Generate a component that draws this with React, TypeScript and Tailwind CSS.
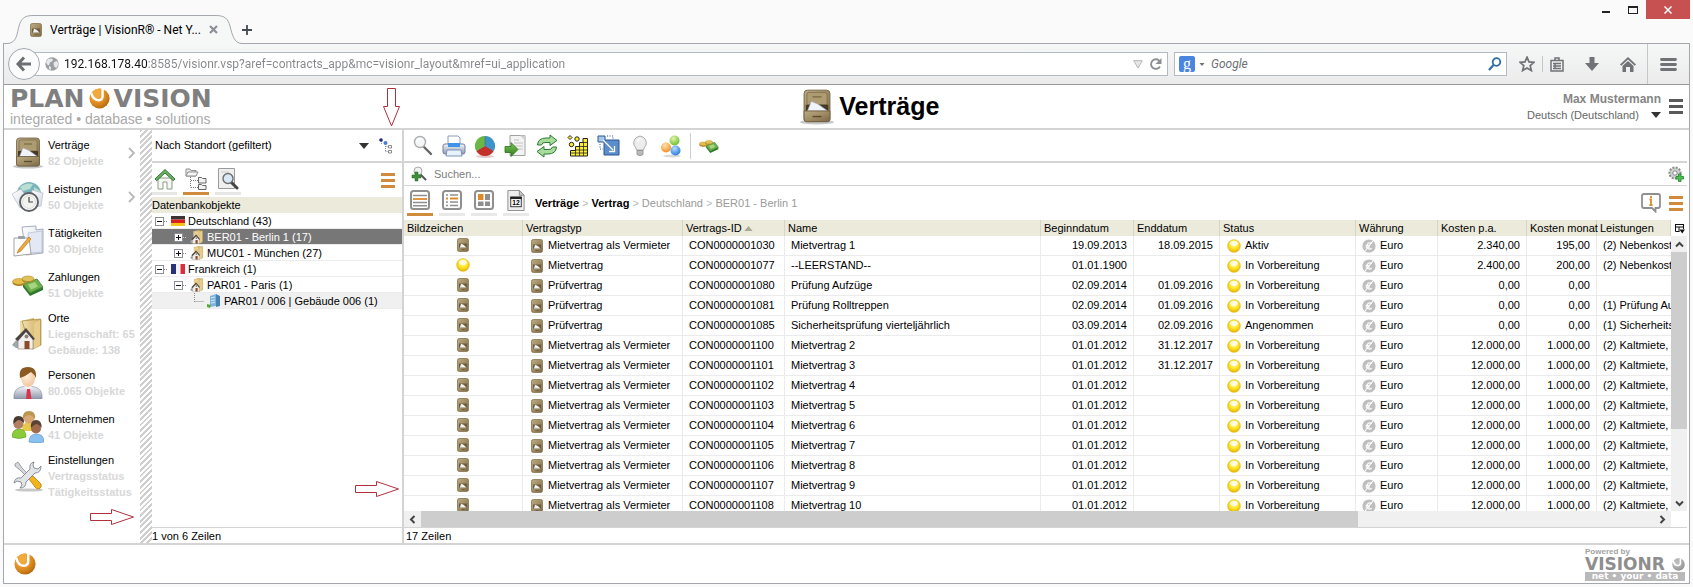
import React from "react";

type IconProps = { className?: string };

/* ---------- drawings ---------- */

function Defs() {
  return (
    <svg width="0" height="0" className="absolute" aria-hidden="true">
      <defs>
        <linearGradient id="tan" x1="0" y1="0" x2="1" y2="1">
          <stop offset="0" stopColor="#bcab82" />
          <stop offset="0.5" stopColor="#a08d65" />
          <stop offset="1" stopColor="#7a6947" />
        </linearGradient>
        <linearGradient id="paper" x1="0" y1="0" x2="1" y2="1">
          <stop offset="0" stopColor="#ffffff" />
          <stop offset="1" stopColor="#d4d8e4" />
        </linearGradient>
        <linearGradient id="folder" x1="0" y1="0" x2="1" y2="0">
          <stop offset="0" stopColor="#f3e2b0" />
          <stop offset="1" stopColor="#cda95a" />
        </linearGradient>
        <linearGradient id="silver" x1="0" y1="0" x2="0" y2="1">
          <stop offset="0" stopColor="#f4f6fa" />
          <stop offset="1" stopColor="#8f98ac" />
        </linearGradient>
        <linearGradient id="leaf" x1="0" y1="0" x2="0" y2="1">
          <stop offset="0" stopColor="#7cc651" />
          <stop offset="1" stopColor="#2f7d1f" />
        </linearGradient>
        <radialGradient id="orangeBall" cx="0.35" cy="0.3" r="0.8">
          <stop offset="0" stopColor="#f7b44a" />
          <stop offset="0.6" stopColor="#dc8a1e" />
          <stop offset="1" stopColor="#a9610c" />
        </radialGradient>
        <radialGradient id="greyBall" cx="0.35" cy="0.3" r="0.8">
          <stop offset="0" stopColor="#d2d2d2" />
          <stop offset="1" stopColor="#8b8b8b" />
        </radialGradient>
        <radialGradient id="yellowBall" cx="0.5" cy="0.35" r="0.65">
          <stop offset="0" stopColor="#fffbd0" />
          <stop offset="0.5" stopColor="#ffe92e" />
          <stop offset="1" stopColor="#e8b400" />
        </radialGradient>
        <radialGradient id="lime" cx="0.4" cy="0.3" r="0.7">
          <stop offset="0" stopColor="#dff5b0" />
          <stop offset="1" stopColor="#72bf2c" />
        </radialGradient>
        <radialGradient id="azure" cx="0.4" cy="0.3" r="0.7">
          <stop offset="0" stopColor="#b5dbff" />
          <stop offset="1" stopColor="#2b7ce0" />
        </radialGradient>
        <radialGradient id="amber" cx="0.4" cy="0.3" r="0.7">
          <stop offset="0" stopColor="#ffe2b0" />
          <stop offset="1" stopColor="#f09226" />
        </radialGradient>
        <radialGradient id="skin" cx="0.4" cy="0.35" r="0.7">
          <stop offset="0" stopColor="#fff1e0" />
          <stop offset="1" stopColor="#f2c499" />
        </radialGradient>
      </defs>
    </svg>
  );
}

const Cabinet = ({ className = "size-8" }: IconProps) => (
  <svg viewBox="0 0 32 32" className={className} aria-hidden="true">
    <ellipse cx="16" cy="29.500" rx="15" ry="2" fill="#000" opacity="0.22" />
    <path d="M4.500 4q0-3 3-3h17q3 0 3 3v23q0 2-2 2h-19q-2 0-2-2z" fill="url(#tan)" stroke="#6f6042" strokeWidth="0.8" />
    <rect x="7" y="3" width="18" height="11" rx="1.500" fill="#ad9b72" stroke="#7a6a48" strokeWidth="0.7" />
    <path d="M12 7h8" stroke="#76663f" strokeWidth="1.100" />
    <path d="M6 14h20v6H6z" fill="#453a25" />
    <path d="M7.500 19.500l3.500-8.500 6 2.500 8.500 6z" fill="#f0f3fa" stroke="#a8afc0" strokeWidth="0.5" />
    <path d="M4.500 19.500h23v7q0 2.500-2.500 2.500H7q-2.500 0-2.500-2.500z" fill="url(#tan)" stroke="#6f6042" strokeWidth="0.8" />
    <path d="M12 24.500h8" stroke="#5a4c2e" strokeWidth="1.300" />
  </svg>
);

const MiniCabinet = () => (
  <svg viewBox="0 0 12 14" className="inline-block h-[14px] w-3 shrink-0" aria-hidden="true">
    <rect x="0.5" y="0.5" width="11" height="13" rx="1.800" fill="url(#tan)" stroke="#85754f" strokeWidth="0.8" />
    <path d="M2 5.500h8v4H2z" fill="#6b5c3e" />
    <path d="M3 9.500l1-3.700 2.500 1 3 2.700z" fill="#f2f2f2" />
    <path d="M4.500 11.500h3" stroke="#6b5a38" strokeWidth="0.8" />
  </svg>
);

const YellowDot = () => (
  <svg viewBox="0 0 14 14" className="inline-block size-[14px] shrink-0" aria-hidden="true">
    <circle cx="7" cy="7" r="6.300" fill="url(#yellowBall)" stroke="#e0b820" strokeWidth="0.7" />
    <ellipse cx="7" cy="4.300" rx="3.800" ry="2.600" fill="#fff" opacity="0.75" />
  </svg>
);

const Coin = () => (
  <svg viewBox="0 0 14 14" className="inline-block size-[14px] shrink-0" aria-hidden="true">
    <circle cx="7" cy="7" r="6.600" fill="#bebebe" />
    <path d="M9.800 4.600Q8 3.300 6.300 4.200 4.800 5.200 4.900 7.500q.3 2 2 2.500 1.500.2 2.800-.8" stroke="#fff" strokeWidth="1.200" fill="none" />
    <path d="M3.500 6.400h4.500M3.500 8.200h4.500" stroke="#fff" strokeWidth="0.900" />
    <path d="M3 12L11 2" stroke="#fff" strokeWidth="1.100" />
  </svg>
);

const Services = () => (
  <svg viewBox="0 0 32 32" className="size-8" aria-hidden="true">
    <circle cx="17" cy="13" r="12" fill="#7ab4bc" />
    <path d="M8 6q6-5 13-3l-3 5-7 2zM22 6l6 4 0 6-6-2z" fill="#b9dfd2" />
    <path d="M0 13l9-5 8 12-9 7z" fill="url(#paper)" stroke="#b6bac4" strokeWidth="0.7" />
    <path d="M20 9l11 3-2 13-9 1z" fill="url(#paper)" stroke="#b6bac4" strokeWidth="0.7" />
    <circle cx="17" cy="21" r="9" fill="#fff" stroke="#5e6166" strokeWidth="2" />
    <circle cx="17" cy="21" r="6.500" fill="#f2f2ee" stroke="#cfcfcf" strokeWidth="0.8" />
    <path d="M17 16v5h4" stroke="#444" strokeWidth="1.200" fill="none" />
  </svg>
);

const Tasks = () => (
  <svg viewBox="0 0 32 32" className="size-8" aria-hidden="true">
    <path d="M10 2l14-1 0 4 7-1v24l-17 2z" fill="url(#paper)" stroke="#9da3b8" strokeWidth="0.9" />
    <path d="M16 8l14-2v21l-12 1z" fill="#e4e8f4" stroke="#b4bace" strokeWidth="0.7" />
    <path d="M2 13h15l2 16-17 2z" fill="#fff" stroke="#9a9a9a" strokeWidth="0.9" />
    <path d="M5 28l2-4L17 12l2 2L9 26z" fill="#f0a93c" stroke="#b8741a" strokeWidth="0.7" />
    <rect x="6" y="11" width="7" height="3" rx="1" fill="#9aa0aa" />
  </svg>
);

const Money = ({ className = "size-8" }: IconProps) => (
  <svg viewBox="0 0 32 32" className={className} aria-hidden="true">
    <path d="M11 15l14-5 6 8-13 6z" fill="#6bb04c" stroke="#2f7023" strokeWidth="0.7" />
    <path d="M11 15l7 9v3l-7-9zM18 24l13-6v3l-13 6z" fill="#2f7a2a" />
    <path d="M16 15.500l7-2.500 3 4.500-7 3z" fill="#a7d57f" />
    <ellipse cx="7" cy="14" rx="6.500" ry="3" fill="#a87a1c" />
    <ellipse cx="7" cy="12.500" rx="6.500" ry="3" fill="#e6bc4c" stroke="#b58a24" strokeWidth="0.6" />
    <ellipse cx="16" cy="11" rx="6" ry="2.800" fill="#9c8a2a" />
    <ellipse cx="16" cy="9.800" rx="6" ry="2.800" fill="#dfc15a" stroke="#a88a2a" strokeWidth="0.6" />
  </svg>
);

const Place = ({ className = "size-8" }: IconProps) => (
  <svg viewBox="0 0 32 32" className={className} aria-hidden="true">
    <path d="M8 3l14-3v28l-14 3z" fill="url(#folder)" />
    <path d="M10 3l18-2q1 0 1 1v25l-8 4-2-1z" fill="url(#folder)" stroke="#a88742" strokeWidth="0.7" />
    <path d="M22 5l6-3v25l-6 4z" fill="#e6cd8c" />
    <path d="M0 27l6-7 2 10H4z" fill="#9fa8a8" />
    <path d="M6 20l8-8 7 8v11H6z" fill="#f2f0ee" stroke="#857b72" strokeWidth="0.6" />
    <path d="M3 21l11-11 9 11-2 1-7-8-8 9z" fill="#4c443e" />
    <rect x="12.500" y="23" width="5" height="8" fill="#8a4b2a" />
    <circle cx="14.500" cy="18.500" r="2" fill="#8d8078" />
  </svg>
);

const Person = () => (
  <svg viewBox="0 0 32 32" className="size-8" aria-hidden="true">
    <path d="M2 32q-1-10 7-12l7-1 7 1q8 2 7 12z" fill="url(#silver)" stroke="#80889e" strokeWidth="0.6" />
    <path d="M12 19l4 5 4-5v-3h-8z" fill="#f4f4fa" />
    <path d="M15 22h3l1.500 10h-5.500z" fill="#d8344c" />
    <ellipse cx="16" cy="11" rx="7" ry="9" fill="url(#skin)" />
    <path d="M8 11q-2-11 8-11 9 0 8 11-2-4-5-6-5 4-11 6z" fill="#8a5a22" />
  </svg>
);

const People = () => (
  <svg viewBox="0 0 32 32" className="size-8" aria-hidden="true">
    <path d="M10 20q0-9 7-9t7 9z" fill="#e8c84a" />
    <circle cx="17" cy="7" r="5.500" fill="#d9a873" />
    <path d="M11 8q-1-8 6-8t6 8q-3-4-6-4t-6 4z" fill="#b99750" />
    <path d="M0 26q0-8 7-8t7 8q-7 3-14 0z" fill="#8ccc3c" stroke="#5c9a1e" strokeWidth="0.6" />
    <circle cx="6.500" cy="13" r="5" fill="#b08060" />
    <path d="M1.500 13q-1-8 5-8t5.500 7q-3-3-5-3t-5.500 4z" fill="#4a3a34" />
    <path d="M17 31q0-8 7.500-8t7.500 8q-8 2-15 0z" fill="#8cc0f0" stroke="#5a90c8" strokeWidth="0.6" />
    <circle cx="24" cy="17.500" r="5" fill="#a06a4c" />
    <path d="M19 17q-1-8 5-8t5.500 8q-3-4-5-4t-5.500 4z" fill="#5a4236" />
  </svg>
);

const Tools = () => (
  <svg viewBox="0 0 32 32" className="size-8" aria-hidden="true">
    <ellipse cx="17" cy="30" rx="14" ry="1.600" fill="#000" opacity="0.22" />
    <path d="M3 4l3-2 4 6 9 9-2 2-9-9-5-4z" fill="#d4d8dc" stroke="#858b92" strokeWidth="0.8" />
    <path d="M17 16l4 0 8 8q1 4-2 5-3 0-4-2l-6-8z" fill="#f2b41e" stroke="#b87c10" strokeWidth="0.8" />
    <path
      d="M22 2q-5 1-4 7L9 18q-6-1-7 5l3-2 4 1 1 3-2 3q6 0 6-6l9-9q6 0 6-7l-3 3-4-1-1-3z"
      fill="#e2e5e8"
      stroke="#7d848c"
      strokeWidth="0.9"
    />
  </svg>
);

const Ball = ({ className, grey }: IconProps & { grey?: boolean }) => (
  <svg viewBox="0 0 24 24" className={className} aria-hidden="true">
    <circle cx="12" cy="12" r="11.500" fill={grey ? "url(#greyBall)" : "url(#orangeBall)"} />
    <path d="M2.500 5.500q2 8.500 8.500 8.500 4.500-.5 4.500-5V1" fill="none" stroke="#fff" strokeWidth="2.800" />
    <path d="M5 4q1 6 5.500 6.500 2.500-.5 2.500-3V.600q-5-.4-8 3.400z" fill={grey ? "#b9b9b9" : "#f3aa3c"} />
  </svg>
);

const Bars = ({ className }: IconProps) => (
  <svg viewBox="0 0 14 15" className={className} fill="currentColor" aria-hidden="true">
    <path d="M0 0h14v3H0zM0 6h14v3H0zM0 12h14v3H0z" />
  </svg>
);

const Caret = ({ className }: IconProps) => (
  <svg viewBox="0 0 10 6" className={className} fill="currentColor" aria-hidden="true">
    <path d="M0 0h10L5 6z" />
  </svg>
);

const RedArrow = ({ className, down }: IconProps & { down?: boolean }) => (
  <svg viewBox={down ? "0 0 17 39" : "0 0 44 16"} className={className} fill="#fff" stroke="#b0303c" aria-hidden="true">
    {down ? (
      <path d="M4.500.5h8v18h4L8.500 38 .5 18.500h4z" />
    ) : (
      <path d="M.5 4.500h21v-4L43.500 8l-22 7.500v-4H.5z" />
    )}
  </svg>
);

const svg24 = "size-6";

const toolbarIcons: { label: string; node: React.ReactNode }[] = [
  {
    label: "Suchen",
    node: (
      <svg viewBox="0 0 24 24" className={svg24}>
        <path d="M13 13l7 7" stroke="#666" strokeWidth="2.400" strokeLinecap="round" />
        <circle cx="9" cy="8" r="5.500" fill="#f4f6f8" stroke="#adadad" strokeWidth="1.400" />
        <path d="M6 8q0-3.500 4-3.500" stroke="#fff" strokeWidth="1.500" fill="none" />
      </svg>
    ),
  },
  {
    label: "Drucken",
    node: (
      <svg viewBox="0 0 24 24" className={svg24}>
        <path d="M6 2h10l2 2v8H6z" fill="#fff" stroke="#8c9cb4" />
        <path d="M3 10h18q2 0 2 2v6q0 2-2 2H3q-2 0-2-2v-6q0-2 2-2z" fill="url(#silver)" stroke="#7080a0" />
        <path d="M6 9h12v4H6z" fill="#3f94e8" />
        <path d="M5 16h14l1 6H4z" fill="#e8f2fc" stroke="#7e93b8" />
      </svg>
    ),
  },
  {
    label: "Diagramm",
    node: (
      <svg viewBox="0 0 24 24" className={svg24}>
        <ellipse cx="12" cy="22.500" rx="9" ry="1.500" fill="#d6b0b0" opacity="0.7" />
        <path d="M12 12V2a10 10 0 0 1 8.700 15z" fill="#3f93c8" />
        <path d="M12 12L20.700 17A10 10 0 0 1 3.300 17z" fill="#c4302a" />
        <path d="M12 12L3.300 17A10 10 0 0 1 12 2z" fill="#69b844" />
        <path d="M12 12V2.500M12 12l8 5M12 12l-8 5" stroke="#224455" strokeWidth="0.6" opacity="0.5" />
      </svg>
    ),
  },
  {
    label: "Exportieren",
    node: (
      <svg viewBox="0 0 24 24" className={svg24}>
        <path d="M6 1.500h15v20H6z" fill="#f3f3f3" stroke="#a0a0a0" />
        <path d="M16 1.500h5v5z" fill="#cfcfcf" />
        <path d="M10 6h5M10 9h9M10 12h9M14 15h5" stroke="#c2c2c2" />
        <path d="M1 12.500h6v-4l7 7-7 7v-4H1z" fill="url(#leaf)" stroke="#2a6e1c" strokeWidth="0.8" />
      </svg>
    ),
  },
  {
    label: "Aktualisieren",
    node: (
      <svg viewBox="0 0 24 24" className={svg24}>
        <path d="M2.500 11Q3 4 11 4h4V1l7 5.500-7 5V8.500h-4Q7 8 6.500 11z" fill="#a8dc9c" stroke="#2d7a34" />
        <path d="M21.500 13Q21 20 13 20H9v3l-7-5.500 7-5V15.500h4q4 .5 4.500-2.500z" fill="#a8dc9c" stroke="#2d7a34" />
      </svg>
    ),
  },
  {
    label: "Berechnen",
    node: (
      <svg viewBox="0 0 24 24" className={svg24}>
        <path d="M17 4.500h4.500v17.500H4.500v-5.500h5v-4h4V8.500H17z" fill="#ffee2a" stroke="#222" />
        <path d="M4.500 19h17M9.500 16h12M13.500 12.500h8M17 8.500h4.500M9.500 16v6M13.500 12v10M17.500 8v14" stroke="#222" strokeWidth="0.8" />
        <circle cx="5.500" cy="10.500" r="2.200" fill="#ffee2a" stroke="#222" />
        <circle cx="11" cy="5" r="2.200" fill="#ffee2a" stroke="#222" />
        <path d="M4 1.500l2 2-2 2-2-2z" fill="#ffee2a" stroke="#222" />
      </svg>
    ),
  },
  {
    label: "Skalieren",
    node: (
      <svg viewBox="0 0 24 24" className={svg24}>
        <path d="M7 6h15v15H7z" fill="#5b8ccc" stroke="#2c5690" />
        <path d="M1 2h7v6H1z" fill="#a9c6ec" stroke="#2c5690" />
        <path d="M10 2h6v4M3 10v5h3" fill="none" stroke="#2c5690" strokeDasharray="1 1.500" />
        <path d="M6 6l10 10M17.500 12v5.500H12" stroke="#fff" strokeWidth="1.300" fill="none" />
      </svg>
    ),
  },
  {
    label: "Hinweis",
    node: (
      <svg viewBox="0 0 24 24" className={svg24}>
        <path d="M8.500 16q-.5-3-2.500-5-1.500-7 6-9 7.500 2 6 9-2 2-2.500 5z" fill="#ededed" stroke="#ababab" />
        <path d="M9 16.500h6v4q-3 2.500-6 0z" fill="#b9b9b9" stroke="#8c8c8c" strokeWidth="0.8" />
        <path d="M9.500 8q.500-3 3-3.500" stroke="#fff" strokeWidth="1.600" fill="none" />
      </svg>
    ),
  },
  {
    label: "Verknüpfungen",
    node: (
      <svg viewBox="0 0 24 24" className={svg24}>
        <ellipse cx="13" cy="22" rx="9" ry="1.500" fill="#000" opacity="0.15" />
        <circle cx="15.500" cy="6.500" r="5" fill="url(#lime)" />
        <circle cx="7" cy="13.500" r="5" fill="url(#amber)" />
        <circle cx="16.500" cy="16.500" r="5" fill="url(#azure)" />
      </svg>
    ),
  },
];

/* ---------- data ---------- */

const navItems = [
  { title: "Verträge", lines: ["82 Objekte"], icon: <Cabinet />, more: true },
  { title: "Leistungen", lines: ["50 Objekte"], icon: <Services />, more: true },
  { title: "Tätigkeiten", lines: ["30 Objekte"], icon: <Tasks /> },
  { title: "Zahlungen", lines: ["51 Objekte"], icon: <Money /> },
  { title: "Orte", lines: ["Liegenschaft: 65", "Gebäude: 138"], icon: <Place /> },
  { title: "Personen", lines: ["80.065 Objekte"], icon: <Person /> },
  { title: "Unternehmen", lines: ["41 Objekte"], icon: <People /> },
  { title: "Einstellungen", lines: ["Vertragsstatus", "Tätigkeitsstatus"], icon: <Tools /> },
];

const columns = [
  { label: "Bildzeichen", width: "w-[119px]" },
  { label: "Vertragstyp", width: "w-[160px]" },
  { label: "Vertrags-ID", width: "w-[102px]", sorted: true },
  { label: "Name", width: "w-auto" },
  { label: "Beginndatum", width: "w-[93px]" },
  { label: "Enddatum", width: "w-[86px]" },
  { label: "Status", width: "w-[136px]" },
  { label: "Währung", width: "w-[82px]" },
  { label: "Kosten p.a.", width: "w-[89px]" },
  { label: "Kosten monat", width: "w-[70px]" },
  { label: "Leistungen", width: "w-[74px]" },
];

type Row = [string, string, string, string, string, string, string, string, string];

const ALS = "Mietvertrag als Vermieter";
const VORB = "In Vorbereitung";
const later = (n: number): Row => [
  ALS,
  `CON000000${1098 + n}`,
  `Mietvertrag ${n}`,
  "01.01.2012",
  n < 4 ? "31.12.2017" : "",
  VORB,
  "12.000,00",
  "1.000,00",
  "(2) Kaltmiete,",
];

const rows: Row[] = [
  [ALS, "CON0000001030", "Mietvertrag 1", "19.09.2013", "18.09.2015", "Aktiv", "2.340,00", "195,00", "(2) Nebenkost"],
  ["Mietvertrag", "CON0000001077", "--LEERSTAND--", "01.01.1900", "", VORB, "2.400,00", "200,00", "(2) Nebenkost"],
  ["Prüfvertrag", "CON0000001080", "Prüfung Aufzüge", "02.09.2014", "01.09.2016", VORB, "0,00", "0,00", ""],
  ["Prüfvertrag", "CON0000001081", "Prüfung Rolltreppen", "02.09.2014", "01.09.2016", VORB, "0,00", "0,00", "(1) Prüfung Au"],
  ["Prüfvertrag", "CON0000001085", "Sicherheitsprüfung vierteljährlich", "03.09.2014", "02.09.2016", "Angenommen", "0,00", "0,00", "(1) Sicherheits"],
  ...[2, 3, 4, 5, 6, 7, 8, 9, 10].map(later),
];

/* ---------- browser chrome ---------- */

function TitleStrip() {
  return (
    <div className="flex h-[43px] items-end justify-between">
      <div className="flex items-end">
        <div className="relative z-10 -mb-px ml-[3px] flex h-[29px] w-[243px] items-center pr-[25px] pl-[27px]">
          <svg viewBox="0 0 243 29" className="absolute inset-0 h-[29px] w-[243px]" aria-hidden="true">
            <path
              d="M0 29v-.5h4C14 28.500 14 18 16 11 18 4 21 .5 30 .5H213C222 .5 225 4 227 11c2 8 4 17.500 12 17.500h4V29z"
              fill="#f6f7f7"
            />
            <path
              d="M0 28.500h4C14 28.500 14 18 16 11 18 4 21 .5 30 .5H213C222 .5 225 4 227 11c2 8 4 17.500 12 17.500h4"
              fill="none"
              stroke="#a4a8ac"
            />
          </svg>
          <span className="relative flex min-w-0 flex-1 items-center gap-2 text-[12px] whitespace-nowrap">
            <MiniCabinet />
            Verträge | VisionR® - Net Y...
          </span>
          <button aria-label="Tab schließen" className="relative mr-[3px]">
            <svg viewBox="0 0 9 9" className="size-[9px]">
              <path d="M1 1l7 7M8 1L1 8" stroke="#8a9096" strokeWidth="2.200" />
            </svg>
          </button>
        </div>
        <button aria-label="Neuer Tab" className="-ml-1 pb-2">
          <svg viewBox="0 0 10 10" className="size-[10px]">
            <path d="M5 0v10M0 5h10" stroke="#444b52" strokeWidth="1.800" />
          </svg>
        </button>
      </div>
      <div className="mr-[3px] flex self-start">
        <button aria-label="Minimieren" className="flex h-[19px] w-[27px] items-center justify-center pt-1">
          <span className="h-0.5 w-2 bg-[#222]" />
        </button>
        <button aria-label="Maximieren" className="flex h-[19px] w-[27px] items-center justify-center">
          <span className="h-2 w-[10px] border border-t-2 border-[#222]" />
        </button>
        <button aria-label="Schließen" className="flex h-[19px] w-11 items-center justify-center bg-[#c75050]">
          <svg viewBox="0 0 8 8" className="size-2">
            <path d="M.5.5l7 7M7.500.5l-7 7" stroke="#fff" strokeWidth="1.500" />
          </svg>
        </button>
      </div>
    </div>
  );
}

function NavToolbar() {
  return (
    <div className="flex h-[41px] items-center border-b border-[#97999b] bg-linear-to-b from-[#f6f7f7] to-[#ebebec] pl-1 text-[#707276]">
      <button
        aria-label="Zurück"
        className="z-10 -mr-3 flex size-8 shrink-0 items-center justify-center rounded-full border border-[#a4a8ac] bg-[#fbfbfb]"
      >
        <svg viewBox="0 0 16 16" className="size-4">
          <path d="M8 1.500L2 8l6 6.500M2.500 8H15" stroke="#6c6e72" strokeWidth="3" fill="none" />
        </svg>
      </button>
      <div className="flex h-6 min-w-0 flex-1 items-center border border-[#b4bac2] bg-white pr-1 pl-4">
        <svg viewBox="0 0 14 14" className="size-[14px] shrink-0" aria-hidden="true">
          <circle cx="7" cy="7" r="6.700" fill="#9c9fa2" />
          <path d="M3 2l4-.500 1 2-3 2-1 3-2-1L1 5zM9 5l3-1 1.500 3-2 4-2-1-1-3zM4 9l2 1v3l-2-1z" fill="#e6e8ea" />
        </svg>
        <input
          aria-label="Adresse"
          defaultValue="192.168.178.40:8585/visionr.vsp?aref=contracts_app&mc=visionr_layout&mref=ui_application"
          className="ml-[5px] min-w-0 flex-1 bg-[linear-gradient(to_right,#111_84px,#85878a_84px)] bg-clip-text text-[12px] text-transparent outline-none"
        />
        <button aria-label="Verlauf" className="mr-[6px]">
          <svg viewBox="0 0 10 9" className="h-[9px] w-[10px]">
            <path d="M.7.7h8.600L5 8z" fill="#e8e8e8" stroke="#b4b6b8" />
          </svg>
        </button>
        <button aria-label="Neu laden">
          <svg viewBox="0 0 14 14" className="size-[14px]">
            <path d="M11 9.500A4.800 4.800 0 1 1 10.500 4" stroke="#8b8f94" strokeWidth="1.900" fill="none" />
            <path d="M12.500 1v6h-6z" fill="#8b8f94" />
          </svg>
        </button>
      </div>
      <div className="ml-[6px] flex h-6 w-[333px] items-center border border-[#b4bac2] bg-white px-1">
        <span className="flex size-4 items-center justify-center rounded-xs bg-[#4a86e0] font-['Liberation_Serif',serif] text-[16px] leading-3 text-white">
          g
        </span>
        <Caret className="ml-1 h-[3px] w-[6px]" />
        <input
          aria-label="Google"
          placeholder="Google"
          className="ml-[6px] min-w-0 flex-1 text-[12px] italic outline-none placeholder:text-[#6d6f72]"
        />
        <button aria-label="Suche starten">
          <svg viewBox="0 0 14 14" className="size-[14px]">
            <circle cx="8.500" cy="5" r="3.800" fill="none" stroke="#2f6ea8" strokeWidth="1.800" />
            <path d="M5.500 8L1 13" stroke="#2f6ea8" strokeWidth="2.200" />
          </svg>
        </button>
      </div>
      <button aria-label="Lesezeichen" className="ml-3">
        <svg viewBox="0 0 16 16" className="size-4">
          <path
            d="M8 1.200l2 4.700 5 .4-3.800 3.300 1.200 5L8 12l-4.400 2.600 1.200-5L1 6.300l5-.4z"
            fill="none"
            stroke="currentColor"
            strokeWidth="1.700"
          />
        </svg>
      </button>
      <span className="ml-[7px] h-4 w-px bg-[#c4c6c8]" />
      <button aria-label="Lesezeichenliste" className="ml-[7px]">
        <svg viewBox="0 0 14 15" className="h-[15px] w-[14px]">
          <path
            d="M1 3.500h12v10.500H1zM5 3V1h4v2M3 6.500h8M3 9h8M3 11.500h8M5 6v6"
            fill="none"
            stroke="currentColor"
            strokeWidth="1.500"
          />
        </svg>
      </button>
      <button aria-label="Downloads" className="ml-[21px]">
        <svg viewBox="0 0 14 14" className="size-[14px]">
          <path d="M4.500 0h5v6H14l-7 8-7-8h4.500z" fill="currentColor" />
        </svg>
      </button>
      <button aria-label="Startseite" className="ml-[21px]">
        <svg viewBox="0 0 16 15" className="h-[15px] w-4">
          <path d="M8 0l8 7.500-1.300 1.200L8 2.500 1.300 8.700 0 7.500z" fill="currentColor" />
          <path d="M8 4l5.500 5v6H10v-5H6v5H2.500V9z" fill="currentColor" />
        </svg>
      </button>
      <span className="ml-[11px] h-full w-px bg-[#c4c6c8]" />
      <button aria-label="Menü" className="mx-3">
        <svg viewBox="0 0 17 13" className="h-[13px] w-[17px]">
          <path
            d="M1.500 1.500h14M1.500 6.500h14M1.500 11.500h14"
            stroke="currentColor"
            strokeWidth="2.800"
            strokeLinecap="round"
          />
        </svg>
      </button>
    </div>
  );
}

/* ---------- application ---------- */

function AppHeader() {
  return (
    <header className="flex h-[45px] shrink-0 items-center justify-between border-b-2 border-[#d4d4d4]">
      <div className="pl-[6px]">
        <div className="flex items-center font-['DejaVu_Sans',sans-serif] text-[25px] leading-6 font-bold text-[#7f7f7f]">
          PLAN
          <Ball className="mx-1 size-[21px]" />
          VISION
        </div>
        <div className="text-[14px] leading-4 text-[#a9a9a9]">integrated • database • solutions</div>
      </div>
      <h1 className="flex items-center gap-1 text-[25px] font-bold text-black">
        <Cabinet className="size-9" />
        Verträge
      </h1>
      <div className="flex items-center justify-end gap-2 pr-[6px]">
        <div className="text-right">
          <div className="text-[12px] leading-4 font-bold text-[#858585]">Max Mustermann</div>
          <label className="flex items-center justify-end gap-3">
            <select aria-label="Sprache" className="appearance-none text-[11px] leading-4 text-[#666] outline-none">
              <option>Deutsch (Deutschland)</option>
            </select>
            <Caret className="h-[6px] w-[10px] text-[#333]" />
          </label>
        </div>
        <button aria-label="Benutzermenü" className="text-[#5a5a5a]">
          <Bars className="h-[15px] w-[14px]" />
        </button>
      </div>
    </header>
  );
}

function SideNav() {
  return (
    <nav className="w-[136px] shrink-0 overflow-hidden pt-px">
      {navItems.map((item) => (
        <a
          key={item.title}
          href={`#${item.title}`}
          className={`flex items-center gap-1 pl-2 ${item.lines.length > 1 ? "py-[3px]" : "py-[6px]"}`}
        >
          <span className="shrink-0">{item.icon}</span>
          <span className="min-w-0 flex-1 leading-4 whitespace-nowrap">
            <span className="block text-black">{item.title}</span>
            {item.lines.map((line) => (
              <span key={line} className="block font-bold text-[#d8d8d8]">
                {line}
              </span>
            ))}
          </span>
          {item.more && (
            <svg viewBox="0 0 8 12" className="mr-1 h-3 w-2 shrink-0" aria-hidden="true">
              <path d="M1 1l5 5-5 5" stroke="#b8b8b8" strokeWidth="1.800" fill="none" />
            </svg>
          )}
        </a>
      ))}
    </nav>
  );
}

const Expander = ({ open, light }: { open: boolean; light?: boolean }) => (
  <svg viewBox="0 0 13 16" className="h-4 w-[13px] shrink-0" aria-hidden="true">
    <path d="M9 8.500h4" stroke={light ? "#ccc" : "#888"} strokeDasharray="1 1" />
    <rect x="0.500" y="4.500" width="8" height="8" fill="#fff" stroke="#8a8f98" />
    <path d={open ? "M2 8.500h5" : "M2 8.500h5M4.500 6v5"} stroke="#111" />
  </svg>
);

const FlagDe = () => (
  <svg viewBox="0 0 14 10" className="h-[10px] w-[14px] shrink-0" aria-hidden="true">
    <path d="M0 0h14v3.500H0z" fill="#3c3434" />
    <path d="M0 3.500h14V7H0z" fill="#d8201c" />
    <path d="M0 7h14v3H0z" fill="#f5c220" />
  </svg>
);

const FlagFr = () => (
  <svg viewBox="0 0 14 10" className="h-[10px] w-[14px] shrink-0" aria-hidden="true">
    <path d="M0 0h5v10H0z" fill="#28327c" />
    <path d="M5 0h4.500v10H5z" fill="#f4f4f8" />
    <path d="M9.500 0H14v10H9.500z" fill="#dc2c3c" />
  </svg>
);

const Building = () => (
  <svg viewBox="0 0 14 14" className="size-[14px] shrink-0" aria-hidden="true">
    <path d="M3 2l6-2v12l-6 1z" fill="#7db4dc" />
    <path d="M9 0l4 2v10l-4 1z" fill="#4a82b4" />
    <path d="M4 4l4-1M4 6.500l4-.500M4 9l4-.500" stroke="#d6ecfa" />
    <path d="M0 10l4 1-1 3-3-1z" fill="#59a83c" />
  </svg>
);

const treeRow = "flex h-4 items-center gap-[3px] border-b border-[#ececec] pt-px whitespace-nowrap";

function TreePanel() {
  return (
    <section className="flex w-[250px] shrink-0 flex-col">
      <div className="flex h-[33px] shrink-0 items-center border-b-2 border-[#d4d4d4] pr-[9px] pl-[3px]">
        <label className="flex flex-1 items-center">
          <select aria-label="Gruppierung" className="flex-1 appearance-none text-[11px] outline-none">
            <option>Nach Standort (gefiltert)</option>
          </select>
          <Caret className="h-[6px] w-[10px] text-[#333]" />
        </label>
        <button aria-label="Baumansicht" className="ml-[10px]">
          <svg viewBox="0 0 14 16" className="h-4 w-[14px]">
            <path
              d="M2.500 3v3M6.500 6v8M6.500 8.500h3M6.500 13.500h3"
              stroke="#8a94a8"
              strokeDasharray="1 1"
              fill="none"
            />
            <circle cx="2" cy="2" r="1.800" fill="#1c2c78" />
            <circle cx="6.500" cy="5" r="2" fill="#4c7cd8" />
            <path d="M9.500 7.500h3v2.500h-3zM9.500 12.500h3V15h-3z" fill="#fff" stroke="#8a8a8a" />
          </svg>
        </button>
      </div>
      <div className="flex h-[34px] shrink-0 items-center justify-between pr-[7px]">
        <div className="flex gap-[6px] self-end pb-0.5">
          <button aria-label="Start" className="flex h-[27px] w-[25px] items-start justify-center border-b-3 border-[#e6e6e6]">
            <svg viewBox="0 0 22 22" className="size-[22px]">
              <path d="M4 10h14v11h-5v-7H9v7H4z" fill="#f6f6f2" stroke="#8c9a86" />
              <path d="M11 1.500L1 11l1.700 1.700L11 5l8.300 7.700L21 11z" fill="#6eb45e" stroke="#2f7436" />
            </svg>
          </button>
          <button aria-label="Hierarchie" className="flex h-[27px] w-[26px] items-start justify-center border-b-3 border-[#d08c3c]">
            <svg viewBox="0 0 22 22" className="size-[22px]">
              <path d="M1 1h4l1 1.500h5V8H1z" fill="#e8e8e8" stroke="#8f8f8f" />
              <path d="M3 4h10l-2 4H1z" fill="#f6f6f6" stroke="#8f8f8f" />
              <path d="M5.500 9v10.500M6 12.500h7M6 19.500h7" stroke="#777" strokeDasharray="1 1" />
              <path d="M13.500 9.500h3l1 1h3.500V15h-7.500zM13.500 16.500h3l1 1h3.500V21.500h-7.500z" fill="#f2f2f2" stroke="#666" />
            </svg>
          </button>
          <button aria-label="Vorschau" className="flex h-[27px] w-[26px] items-start justify-center border-b-3 border-[#e6e6e6]">
            <svg viewBox="0 0 22 22" className="size-[22px]">
              <path d="M1.500.5h16v20h-16z" fill="#efefef" stroke="#9a9a9a" />
              <path d="M4 4h8" stroke="#ccc" />
              <path d="M14 14l6 6" stroke="#444" strokeWidth="3" strokeLinecap="round" />
              <circle cx="11" cy="10.500" r="5" fill="#d8e8f6" stroke="#6d6d6d" strokeWidth="1.400" />
            </svg>
          </button>
        </div>
        <button aria-label="Menü der Struktur" className="text-[#d08c3c]">
          <Bars className="h-[15px] w-[14px]" />
        </button>
      </div>
      <div className="h-4 shrink-0 bg-[#ebeadb] leading-4">Datenbankobjekte</div>
      <ul className="min-h-0 flex-1">
        <li className={`${treeRow} pl-[3px]`}>
          <Expander open />
          <FlagDe />
          Deutschland (43)
        </li>
        <li className={`${treeRow} bg-[#777] pl-[22px] text-white`}>
          <Expander open={false} light />
          <Place className="size-[14px] shrink-0" />
          BER01 - Berlin 1 (17)
        </li>
        <li className={`${treeRow} pl-[22px]`}>
          <Expander open={false} />
          <Place className="size-[14px] shrink-0" />
          MUC01 - München (27)
        </li>
        <li className={`${treeRow} pl-[3px]`}>
          <Expander open />
          <FlagFr />
          Frankreich (1)
        </li>
        <li className={`${treeRow} pl-[22px]`}>
          <Expander open />
          <Place className="size-[14px] shrink-0" />
          PAR01 - Paris (1)
        </li>
        <li className={`${treeRow} bg-[#f0f0f0] pl-[42px]`}>
          <svg viewBox="0 0 10 16" className="h-4 w-[10px] shrink-0" aria-hidden="true">
            <path d="M.5 0v9M.5 8.500H10" stroke="#888" strokeDasharray="1 1" fill="none" />
          </svg>
          <Building />
          PAR01 / 006 | Gebäude 006 (1)
        </li>
      </ul>
      <div className="h-4 shrink-0 border-t border-[#d4d4d4] leading-4">1 von 6 Zeilen</div>
    </section>
  );
}

const viewButton = "flex h-[26px] w-[26px] items-start justify-center border-b-3";

function ViewRow() {
  return (
    <div className="flex h-[34px] shrink-0 items-center pr-1 pl-[3px]">
      <div className="flex gap-[6px]">
        <button aria-label="Liste" className={`${viewButton} border-[#d08c3c]`}>
          <svg viewBox="0 0 20 20" className="size-5">
            <rect x="1" y="1" width="18" height="18" rx="2.500" fill="#fff" stroke="#8f8f8f" strokeWidth="2" />
            <path d="M3 5.500h14M3 12.500h14M3 15.800h14" stroke="#8f8f8f" strokeWidth="1.600" />
            <path d="M3 9h14" stroke="#dd8a2c" strokeWidth="1.800" />
          </svg>
        </button>
        <button aria-label="Details" className={`${viewButton} border-[#e8e8e8]`}>
          <svg viewBox="0 0 20 20" className="size-5">
            <rect x="1" y="1" width="18" height="18" rx="2.500" fill="#fff" stroke="#8f8f8f" strokeWidth="2" />
            <path d="M4 5h2M4 12h2M4 15.500h2M8 5h8M8 12h8M8 15.500h8" stroke="#8f8f8f" strokeWidth="1.600" />
            <path d="M8 8.500h8M4 8.500h2" stroke="#dd8a2c" strokeWidth="1.800" />
          </svg>
        </button>
        <button aria-label="Kacheln" className={`${viewButton} border-[#e8e8e8]`}>
          <svg viewBox="0 0 20 20" className="size-5">
            <rect x="1" y="1" width="18" height="18" rx="2.500" fill="#fff" stroke="#8f8f8f" strokeWidth="2" />
            <path d="M4 4h5.500v6H4z" fill="#dd8a2c" />
            <path d="M11 4h5v6h-5zM4 11.500h5.500V16H4zM11 11.500h5V16h-5z" fill="#8f8f8f" />
          </svg>
        </button>
        <button aria-label="Kalender" className={`${viewButton} border-[#e8e8e8]`}>
          <svg viewBox="0 0 18 22" className="h-[21px] w-[18px]">
            <path d="M.5.5h12l5 5v16H.5z" fill="#eee" stroke="#8c8c8c" />
            <path d="M12.500.5v5h5z" fill="#ccc" stroke="#8c8c8c" />
            <rect x="3.500" y="7.500" width="11" height="10" fill="#fff" stroke="#333" />
            <path d="M3 7h12v2.500H3z" fill="#222" />
            <text x="9" y="16.200" fontSize="7" fontWeight="700" textAnchor="middle" fontFamily="Liberation Sans, sans-serif">
              12
            </text>
          </svg>
        </button>
      </div>
      <nav aria-label="Pfad" className="ml-[6px] flex gap-[3px] text-[#9a9a9a]">
        <a href="#vertraege" className="font-bold text-black">
          Verträge
        </a>
        <span className="text-[#bbb]">&gt;</span>
        <a href="#vertrag" className="font-bold text-black">
          Vertrag
        </a>
        <span className="text-[#bbb]">&gt;</span>
        <a href="#deutschland">Deutschland</a>
        <span className="text-[#bbb]">&gt;</span>
        <a href="#ber01">BER01 - Berlin 1</a>
      </nav>
      <button aria-label="Information" className="ml-auto">
        <svg viewBox="0 0 20 20" className="size-5">
          <path
            d="M3 1h14q2 0 2 2v10q0 2-2 2h-2.500v3.500L11 15H3q-2 0-2-2V3q0-2 2-2z"
            fill="#fff"
            stroke="#8f8f8f"
            strokeWidth="1.800"
          />
          <path d="M10 3v2M8.500 6.500H10v5M8.500 12h3" stroke="#dd8a2c" strokeWidth="1.800" fill="none" />
        </svg>
      </button>
      <button aria-label="Menü der Liste" className="ml-2 text-[#d08c3c]">
        <Bars className="h-[15px] w-[14px]" />
      </button>
    </div>
  );
}

const cell = "overflow-hidden border-r border-b border-[#ebebeb] px-[6px] whitespace-nowrap";
const Chevron = ({ d }: { d: string }) => (
  <svg viewBox="0 0 9 9" className="size-[9px]" aria-hidden="true">
    <path d={d} stroke="#444" strokeWidth="2" fill="none" />
  </svg>
);

function ContractTable() {
  return (
    <div className="flex min-h-0 flex-1">
      <div className="min-w-0 flex-1 overflow-hidden">
        <table className="w-full table-fixed border-separate border-spacing-0">
          <thead>
            <tr className="h-4 bg-[#ebeadb]">
              {columns.map((c) => (
                <th
                  key={c.label}
                  className={`${c.width} border-r border-[#d6d5c6] pl-[3px] text-left leading-4 font-normal whitespace-nowrap`}
                >
                  {c.label}
                  {c.sorted && <Caret className="mb-0.5 ml-0.5 inline-block h-[5px] w-[9px] rotate-180 text-[#a9a996]" />}
                </th>
              ))}
            </tr>
          </thead>
          <tbody>
            {rows.map((r, i) => (
              <tr key={r[1]} className="h-5">
                <td className={`${cell} text-center`}>
                  <div className="flex justify-center pb-0.5">{i === 1 ? <YellowDot /> : <MiniCabinet />}</div>
                </td>
                <td className={cell}>
                  <div className="flex items-center gap-[5px] pl-0.5">
                    <MiniCabinet />
                    {r[0]}
                  </div>
                </td>
                <td className={cell}>{r[1]}</td>
                <td className={cell}>{r[2]}</td>
                <td className={`${cell} text-right`}>{r[3]}</td>
                <td className={`${cell} text-right`}>{r[4]}</td>
                <td className={cell}>
                  <div className="flex items-center gap-1 pl-px">
                    <YellowDot />
                    {r[5]}
                  </div>
                </td>
                <td className={cell}>
                  <div className="flex items-center gap-1">
                    <Coin />
                    Euro
                  </div>
                </td>
                <td className={`${cell} text-right`}>{r[6]}</td>
                <td className={`${cell} text-right`}>{r[7]}</td>
                <td className={`${cell} border-r-0 pr-0`}>{r[8]}</td>
              </tr>
            ))}
          </tbody>
        </table>
      </div>
      <div className="flex w-4 shrink-0 flex-col">
        <button aria-label="Spalten wählen" className="flex h-4 shrink-0 items-center justify-center">
          <svg viewBox="0 0 11 11" className="size-[11px]">
            <path d="M1 1.500h9M1 4h9M1.500 1v7.500h4M5 4v4.500M9.500 1v5" stroke="#111" fill="none" />
            <path d="M5.500 6.500H11L8.200 10.500z" fill="#111" />
          </svg>
        </button>
        <button aria-label="Nach oben" className="flex h-4 shrink-0 items-center justify-center bg-[#f0f0f0]">
          <Chevron d="M1 6.500L4.500 3 8 6.500" />
        </button>
        <div className="min-h-0 flex-1 bg-[#f0f0f0]">
          <div className="h-[73%] bg-[#cdcdcd]" />
        </div>
        <button aria-label="Nach unten" className="flex h-4 shrink-0 items-center justify-center bg-[#f0f0f0]">
          <Chevron d="M1 2.500L4.500 6 8 2.500" />
        </button>
      </div>
    </div>
  );
}

function MainPanel() {
  return (
    <main className="mr-0.5 flex min-w-0 flex-1 flex-col border-l-2 border-[#d4d4d4]">
      <div className="flex h-[33px] shrink-0 items-center border-b-2 border-[#d4d4d4] pl-[3px]">
        {toolbarIcons.map((t) => (
          <button key={t.label} aria-label={t.label} className="flex w-[31px] justify-center">
            {t.node}
          </button>
        ))}
        <span className="ml-1 h-[26px] w-px bg-[#cfcfcf]" />
        <button aria-label="Zahlungen" className="ml-2">
          <Money className="size-5" />
        </button>
      </div>
      <label className="flex h-[23px] shrink-0 items-center border-b border-[#d4d4d4] pr-[3px] pl-[7px]">
        <svg viewBox="0 0 16 16" className="size-4 shrink-0" aria-hidden="true">
          <path d="M9 8l6 6" stroke="#555" strokeWidth="2" />
          <circle cx="7" cy="5" r="4" fill="#f0f2f4" stroke="#aaa" />
          <path d="M4 6h3v3h3v3H7v3H4v-3H1V9h3z" fill="#3f8f3a" stroke="#226a22" strokeWidth="0.500" />
        </svg>
        <input
          aria-label="Suchen"
          placeholder="Suchen..."
          className="ml-[7px] min-w-0 flex-1 text-[11px] outline-none placeholder:text-[#7d7d7d]"
        />
        <svg viewBox="0 0 16 16" className="size-4 shrink-0" aria-hidden="true">
          <circle cx="7" cy="7" r="5.600" fill="#d0d0d0" stroke="#8c8c8c" strokeWidth="2" strokeDasharray="2 1.300" />
          <circle cx="7" cy="7" r="2.200" fill="#fff" stroke="#888" />
          <path
            d="M10.500 8h2.500v2.500h2.500V13H13v2.500h-2.500V13H8v-2.500h2.500z"
            fill="#4cc24a"
            stroke="#1c8430"
            strokeWidth="0.800"
          />
        </svg>
      </label>
      <ViewRow />
      <ContractTable />
      <div className="mr-4 flex h-4 shrink-0 items-stretch bg-[#f0f0f0]">
        <button aria-label="Nach links" className="flex w-[17px] shrink-0 items-center justify-center">
          <Chevron d="M6.500 1L3 4.500 6.500 8" />
        </button>
        <div className="min-w-0 flex-1">
          <div className="h-full w-[76%] bg-[#cdcdcd]" />
        </div>
        <button aria-label="Nach rechts" className="flex w-[17px] shrink-0 items-center justify-center">
          <Chevron d="M2.500 1L6 4.500 2.500 8" />
        </button>
      </div>
      <div className="h-4 shrink-0 border-t border-[#d4d4d4] pl-0.5 leading-4">17 Zeilen</div>
    </main>
  );
}

export default function App() {
  return (
    <div className="flex h-screen flex-col bg-[#fafafa] pb-[3px] font-[Roboto,'Open_Sans',sans-serif] text-black">
      <Defs />
      <TitleStrip />
      <div className="mx-[3px] flex min-h-0 flex-1 flex-col border border-[#a4a8ac] bg-white">
        <NavToolbar />
        <div className="relative flex min-h-0 flex-1 flex-col font-['Liberation_Sans',Arial,sans-serif] text-[11px]">
          <AppHeader />
          <div className="flex min-h-0 flex-1">
            <SideNav />
            <div className="w-3 shrink-0 bg-[repeating-linear-gradient(135deg,#cfcfcf_0px,#cfcfcf_2px,#fff_2px,#fff_4px)]" />
            <TreePanel />
            <MainPanel />
          </div>
          <footer className="flex h-10 shrink-0 items-center justify-between border-t-2 border-[#d4d4d4] pr-1 pl-[10px]">
            <Ball className="size-[22px]" />
            <div className="w-[100px] text-[#8e8e8e]">
              <div className="text-[8px] leading-[9px] font-bold text-[#a2a2a2]">Powered by</div>
              <div className="flex items-center justify-between font-['DejaVu_Sans',sans-serif] text-[17px] leading-4 font-bold">
                VISIONR
                <Ball grey className="size-[13px]" />
              </div>
              <div className="bg-[#b9b9b9] text-center font-['DejaVu_Sans',sans-serif] text-[9px] leading-[9px] font-bold text-white">
                net • your • data
              </div>
            </div>
          </footer>
          <RedArrow down className="absolute top-[3px] left-[379px] h-[39px] w-[17px]" />
          <RedArrow className="absolute bottom-[86px] left-[351px] h-4 w-11" />
          <RedArrow className="absolute bottom-[58px] left-[86px] h-4 w-11" />
        </div>
      </div>
    </div>
  );
}
